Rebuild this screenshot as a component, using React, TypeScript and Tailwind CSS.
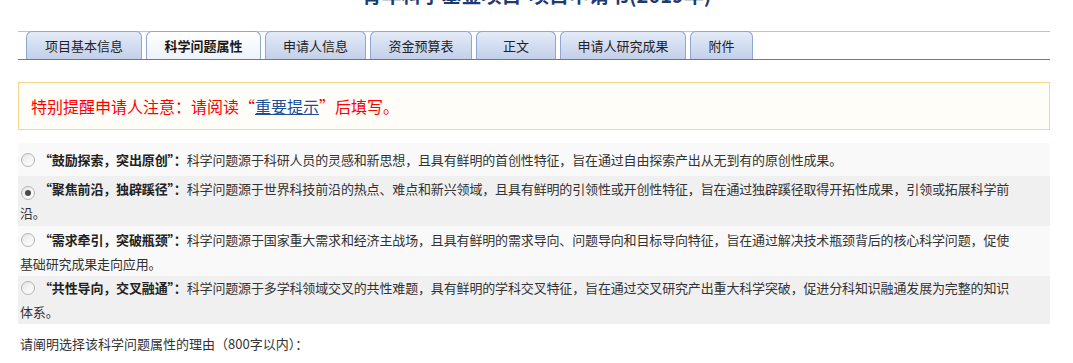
const tabs = [
  { label: "项目基本信息", w: "w-[116px]" },
  { label: "科学问题属性", w: "w-[115px]", active: true },
  { label: "申请人信息", w: "w-[101px]" },
  { label: "资金预算表", w: "w-[102px]" },
  { label: "正文", w: "w-[80px]" },
  { label: "申请人研究成果", w: "w-[126px]" },
  { label: "附件", w: "w-[63px]" },
];

const options = [
  {
    title: "“鼓励探索，突出原创”：",
    text: "科学问题源于科研人员的灵感和新思想，且具有鲜明的首创性特征，旨在通过自由探索产出从无到有的原创性成果。",
    bg: "bg-[#f9f9f9]",
    pad: "pt-[5px] pb-[4px]",
  },
  {
    title: "“聚焦前沿，独辟蹊径”：",
    text: "科学问题源于世界科技前沿的热点、难点和新兴领域，且具有鲜明的引领性或开创性特征，旨在通过独辟蹊径取得开拓性成果，引领或拓展科学前沿。",
    bg: "bg-[#f0f0f0]",
    pad: "pt-[1px] pb-[1px]",
    checked: true,
  },
  {
    title: "“需求牵引，突破瓶颈”：",
    text: "科学问题源于国家重大需求和经济主战场，且具有鲜明的需求导向、问题导向和目标导向特征，旨在通过解决技术瓶颈背后的核心科学问题，促使基础研究成果走向应用。",
    bg: "bg-[#f9f9f9]",
    pad: "pt-[2px] pb-0",
  },
  {
    title: "“共性导向，交叉融通”：",
    text: "科学问题源于多学科领域交叉的共性难题，具有鲜明的学科交叉特征，旨在通过交叉研究产出重大科学突破，促进分科知识融通发展为完整的知识体系。",
    bg: "bg-[#f0f0f0]",
    pad: "pt-0 pb-0",
  },
];

function Radio({ checked }: { checked?: boolean }) {
  return (
    <span className="inline-flex items-center justify-center w-[14px] h-[14px] ml-[1px] mr-[4px] align-[-2px] rounded-full border border-[#b4b4b4] bg-gradient-to-br from-[#e2e2e2] via-[#f4f4f4] to-white">
      {checked && <span className="w-[6px] h-[6px] rounded-full bg-[#4a4a4a]" />}
    </span>
  );
}

export default function App() {
  return (
    <div className="w-[1073px] h-[363px] overflow-hidden bg-white font-['Noto_Sans_CJK_SC','Noto_Sans',sans-serif] text-[#333]">
      <h1 className="mt-[-15px] h-[20px] text-center text-[20px] leading-[20px] font-bold text-[#1d3b72]">
        青年科学基金项目-项目申请书(2019年)
      </h1>

      <div className="ml-[18px] w-[1032px]">
        <div className="mt-[26px] flex gap-[4px] pl-[8px] border-t border-[#b3c4e2] border-b border-b-[#5b7cb8]">
          {tabs.map((t) => (
            <div
              key={t.label}
              className={`${t.w} h-[28px] -mt-px flex items-center justify-center rounded-t-[6px] border border-b-0 border-[#8ea6d0] text-[13px] ${
                t.active
                  ? "bg-gradient-to-b from-white to-[#eef2fa] font-bold text-[#1a1a1a]"
                  : "bg-gradient-to-b from-[#e4ebf8] to-[#c3d0ea] text-[#222]"
              }`}
            >
              {t.label}
            </div>
          ))}
        </div>

        <div className="mt-[22px] h-[48px] flex items-center pl-[12px] border border-[#f8d58c] bg-[#fffdf7] text-[16px] text-[#ff0000]">
          特别提醒申请人注意：请阅读“<a className="text-[#1b4f9c] underline">重要提示</a>”后填写。
        </div>

        <div className="mt-[13px]">
          {options.map((o) => (
            <div
              key={o.title}
              className={`${o.bg} ${o.pad} pl-[2px] pr-[32px] text-[13px] leading-[24px] tracking-[-0.15px]`}
            >
              <Radio checked={o.checked} />
              <span className="font-bold text-[#222]">{o.title}</span>
              {o.text}
            </div>
          ))}
        </div>

        <p className="mt-[8px] pl-[2px] text-[13px] leading-[24px]">
          请阐明选择该科学问题属性的理由（800字以内）：
        </p>
      </div>
    </div>
  );
}
